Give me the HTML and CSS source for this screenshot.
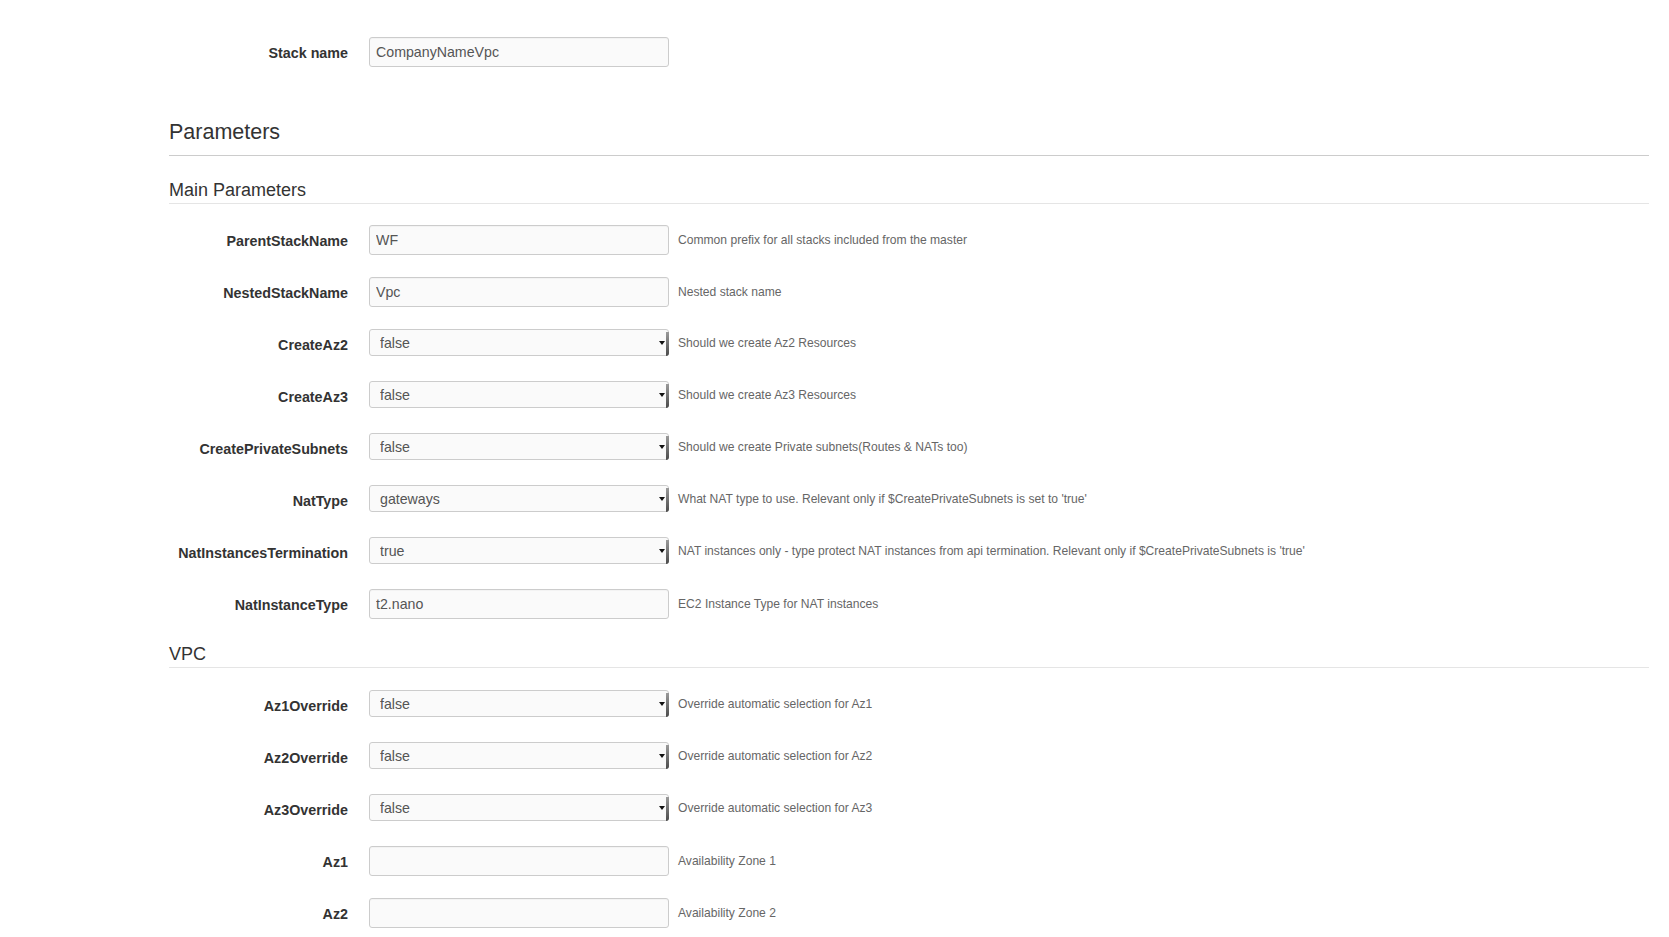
FILE: index.html
```html
<!DOCTYPE html>
<html lang="en">
<head>
  <meta charset="UTF-8" />
  <meta name="viewport" content="width=device-width, initial-scale=1.0"/>
  <title>Specify Details</title>
  <link rel="stylesheet" href="styles.css">
</head>
<body>

  <div class="page">

    <div class="form-row stack-row">
      <label class="field-label" for="stackName">Stack name</label>
      <div class="controls">
        <input class="text-input" id="stackName" type="text" value="CompanyNameVpc" />
      </div>
    </div>

    <h2 class="section-title">Parameters</h2>

    <h3 class="group-title">Main Parameters</h3>

    <div class="form-row">
      <label class="field-label">ParentStackName</label>
      <div class="controls">
        <input class="text-input" type="text" value="WF" />
        <span class="help">Common prefix for all stacks included from the master</span>
      </div>
    </div>

    <div class="form-row">
      <label class="field-label">NestedStackName</label>
      <div class="controls">
        <input class="text-input" type="text" value="Vpc" />
        <span class="help">Nested stack name</span>
      </div>
    </div>

    <div class="form-row">
      <label class="field-label">CreateAz2</label>
      <div class="controls">
        <span class="select-wrap">
          <select class="select-input"><option>false</option><option>true</option></select>
        </span>
        <span class="help">Should we create Az2 Resources</span>
      </div>
    </div>

    <div class="form-row">
      <label class="field-label">CreateAz3</label>
      <div class="controls">
        <span class="select-wrap">
          <select class="select-input"><option>false</option><option>true</option></select>
        </span>
        <span class="help">Should we create Az3 Resources</span>
      </div>
    </div>

    <div class="form-row">
      <label class="field-label">CreatePrivateSubnets</label>
      <div class="controls">
        <span class="select-wrap">
          <select class="select-input"><option>false</option><option>true</option></select>
        </span>
        <span class="help">Should we create Private subnets(Routes &amp; NATs too)</span>
      </div>
    </div>

    <div class="form-row">
      <label class="field-label">NatType</label>
      <div class="controls">
        <span class="select-wrap">
          <select class="select-input"><option>gateways</option><option>instances</option></select>
        </span>
        <span class="help">What NAT type to use. Relevant only if $CreatePrivateSubnets is set to 'true'</span>
      </div>
    </div>

    <div class="form-row">
      <label class="field-label">NatInstancesTermination</label>
      <div class="controls">
        <span class="select-wrap">
          <select class="select-input"><option>true</option><option>false</option></select>
        </span>
        <span class="help">NAT instances only - type protect NAT instances from api termination. Relevant only if $CreatePrivateSubnets is 'true'</span>
      </div>
    </div>

    <div class="form-row">
      <label class="field-label">NatInstanceType</label>
      <div class="controls">
        <input class="text-input" type="text" value="t2.nano" />
        <span class="help">EC2 Instance Type for NAT instances</span>
      </div>
    </div>

    <h3 class="group-title next-group">VPC</h3>

    <div class="form-row">
      <label class="field-label">Az1Override</label>
      <div class="controls">
        <span class="select-wrap">
          <select class="select-input"><option>false</option><option>true</option></select>
        </span>
        <span class="help">Override automatic selection for Az1</span>
      </div>
    </div>

    <div class="form-row">
      <label class="field-label">Az2Override</label>
      <div class="controls">
        <span class="select-wrap">
          <select class="select-input"><option>false</option><option>true</option></select>
        </span>
        <span class="help">Override automatic selection for Az2</span>
      </div>
    </div>

    <div class="form-row">
      <label class="field-label">Az3Override</label>
      <div class="controls">
        <span class="select-wrap">
          <select class="select-input"><option>false</option><option>true</option></select>
        </span>
        <span class="help">Override automatic selection for Az3</span>
      </div>
    </div>

    <div class="form-row">
      <label class="field-label">Az1</label>
      <div class="controls">
        <input class="text-input" type="text" value="" />
        <span class="help">Availability Zone 1</span>
      </div>
    </div>

    <div class="form-row">
      <label class="field-label">Az2</label>
      <div class="controls">
        <input class="text-input" type="text" value="" />
        <span class="help">Availability Zone 2</span>
      </div>
    </div>

  </div>

</body>
</html>
```

FILE: styles.css
```css
body {
  font-family: "Liberation Sans", Arial, Helvetica, sans-serif;
  font-size: 14px;
  color: #333;
  background-color: #fff;
  margin: 0;
}

.page {
  padding: 37px 20px 0 169px;
}

/* one label + control + hint line */
.form-row {
  display: flex;
  align-items: flex-start;
  height: 30px;
  margin-bottom: 22px;
}

.stack-row {
  margin-bottom: 53px;
}

.field-label {
  width: 179px;
  margin-right: 21px;
  padding-top: 6px;
  line-height: 20px;
  font-size: 14.3px;
  font-weight: bold;
  text-align: right;
  color: #333;
  white-space: nowrap;
}

.controls {
  display: flex;
  align-items: center;
}

.text-input {
  width: 300px;
  height: 30px;
  box-sizing: border-box;
  padding: 0 6px;
  font-family: inherit;
  font-size: 14.2px;
  color: #555;
  background-color: #fafafa;
  border: 1px solid #ccc;
  border-radius: 3px;
  box-shadow: inset 0 1px 1px rgba(0, 0, 0, 0.03);
  outline: none;
}

/* old-style select with the dark arrow strip on the right */
.select-wrap {
  position: relative;
  display: block;
  width: 300px;
  height: 27px;
}

.select-input {
  -webkit-appearance: none;
  appearance: none;
  width: 300px;
  height: 27px;
  box-sizing: border-box;
  padding: 0 10px;
  font-family: inherit;
  font-size: 14.2px;
  color: #555;
  background-color: #fafafa;
  border: 1px solid #ccc;
  border-radius: 3px;
  outline: none;
}

.select-wrap::before {
  content: "";
  position: absolute;
  right: 4px;
  top: 12px;
  border-left: 3px solid transparent;
  border-right: 3px solid transparent;
  border-top: 4px solid #111;
  pointer-events: none;
}

.select-wrap::after {
  content: "";
  position: absolute;
  right: 0;
  top: 3px;
  bottom: 0;
  width: 3px;
  background: linear-gradient(#9a9a9a, #4a4a4a);
  border-radius: 0 0 3px 0;
  pointer-events: none;
}

.help {
  margin-left: 9px;
  font-size: 12.1px;
  color: #666;
  white-space: nowrap;
}

.section-title {
  margin: 0 0 24px;
  padding-bottom: 11px;
  font-size: 21.5px;
  line-height: 24px;
  font-weight: normal;
  color: #333;
  border-bottom: 1px solid #ccc;
}

.group-title {
  margin: 0 0 21px;
  padding-bottom: 3px;
  font-size: 18px;
  line-height: 20px;
  font-weight: normal;
  color: #333;
  border-bottom: 1px solid #e5e5e5;
}

.next-group {
  margin-top: 25px;
  margin-bottom: 22px;
}
```
